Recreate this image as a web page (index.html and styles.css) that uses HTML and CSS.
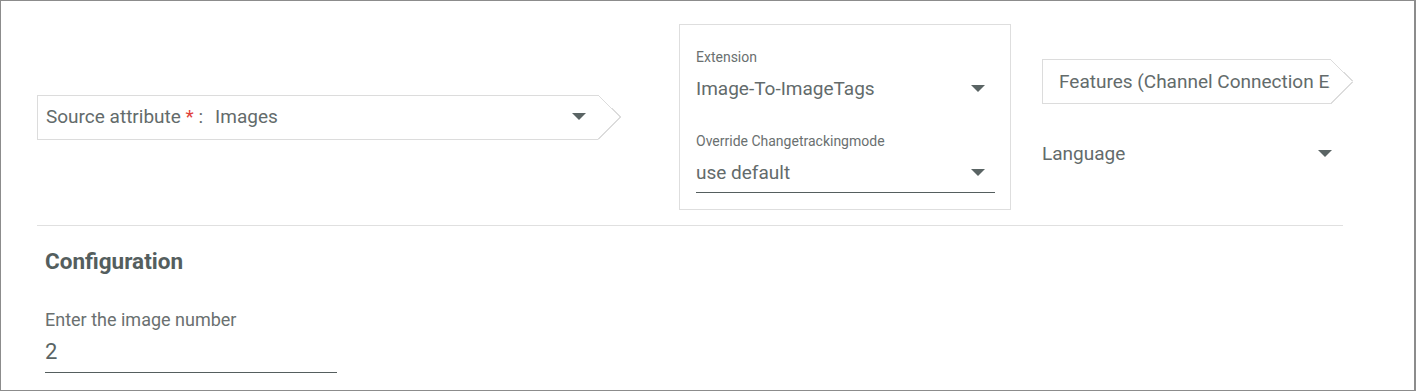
FILE: index.html
```html
<!DOCTYPE html>
<html>
<head>
<meta charset="utf-8">
<link rel="stylesheet" href="styles.css">
</head>
<body>
<div class="frame">
  <div class="top-row">
    <div class="col col-source">
      <div class="chevron-box source-box">
        <span class="src-label">Source attribute <span class="req">*</span> :</span>
        <span class="src-value">Images</span>
        <span class="caret"></span>
      </div>
    </div>
    <div class="col col-ext">
      <div class="ext-box">
        <div class="field">
          <div class="field-label">Extension</div>
          <div class="select-row">
            <span class="select-value">Image-To-ImageTags</span>
            <span class="caret"></span>
          </div>
        </div>
        <div class="field">
          <div class="field-label">Override Changetrackingmode</div>
          <div class="select-row underlined">
            <span class="select-value">use default</span>
            <span class="caret"></span>
          </div>
        </div>
      </div>
    </div>
    <div class="col col-right">
      <div class="chevron-box features-box">
        <span class="features-text">Features (Channel Connection Extension)</span>
      </div>
      <div class="select-row lang-row">
        <span class="select-value">Language</span>
        <span class="caret"></span>
      </div>
    </div>
  </div>
  <div class="divider"></div>
  <div class="config">
    <h2 class="config-title">Configuration</h2>
    <div class="input-field">
      <div class="input-label">Enter the image number</div>
      <div class="input-value">2</div>
    </div>
  </div>
</div>
</body>
</html>
```
FILE: styles.css
```css
html, body {
  margin: 0;
  padding: 0;
  background: #ffffff;
}
body {
  font-family: Roboto, "Noto Sans", sans-serif;
  color: #5f6868;
}
.frame {
  box-sizing: border-box;
  width: 1416px;
  height: 391px;
  border: 1px solid #8c8c8c;
  border-right-width: 2px;
  overflow: hidden;
}
.top-row {
  display: grid;
  grid-template-columns: 584px 332px 311px;
  column-gap: 58px;
  padding-left: 36px;
  padding-top: 23px;
}
.top-row .col-right { margin-left: -27px; }
.col {
  display: flex;
  flex-direction: column;
}
.col-source {
  justify-content: center;
}
.chevron-box {
  position: relative;
  box-sizing: border-box;
  height: 45px;
  border: 1px solid #dcdcdc;
  border-right: none;
  display: flex;
  align-items: center;
  background: #fff;
}
.chevron-box::after {
  content: "";
  position: absolute;
  top: -1px;
  right: -23px;
  width: 23px;
  height: 45px;
  background: linear-gradient(to top right, transparent calc(50% - 0.7px), #dcdcdc calc(50% - 0.7px), #dcdcdc calc(50% + 0.5px), transparent calc(50% + 0.5px)) top / 100% 50% no-repeat,
              linear-gradient(to bottom right, transparent calc(50% - 0.7px), #dcdcdc calc(50% - 0.7px), #dcdcdc calc(50% + 0.5px), transparent calc(50% + 0.5px)) bottom / 100% 50% no-repeat;
}
.source-box {
  width: 561px;
  padding-left: 8px;
  padding-right: 12px;
  font-size: 19px;
  padding-bottom: 1px;
}
.src-label { color: #636b6b; }
.req { color: #e0403a; }
.src-value {
  margin-left: 12px;
  flex: 1;
  color: #636b6b;
}
.caret {
  width: 0;
  height: 0;
  border-left: 7px solid transparent;
  border-right: 7px solid transparent;
  border-top: 7px solid #5a6464;
  flex: none;
}
.ext-box {
  box-sizing: border-box;
  height: 186px;
  border: 1px solid #dedede;
  padding: 24px 15px 0 16px;
}
.field + .field { margin-top: 30px; }
.field-label {
  font-size: 14px;
  color: #6a7070;
  line-height: 16px;
}
.select-row {
  display: flex;
  align-items: center;
  height: 30px;
  margin-top: 8px;
  font-size: 19px;
  color: #636b6b;
}
.select-row .caret { margin-right: 10px; }
.select-value { flex: 1; }
.underlined {
  box-sizing: content-box;
  border-bottom: 1px solid #555e5e;
  height: 30px;
  padding-bottom: 5px;
}
.col-right {
  padding-top: 35px;
}
.features-box {
  width: 288px;
  padding-left: 16px;
  font-size: 19px;
  overflow: visible;
}
.features-text {
  display: block;
  width: 271px;
  overflow: hidden;
  white-space: nowrap;
  color: #636b6b;
}
.lang-row {
  margin-top: 34px;
  width: 290px;
}
.lang-row .caret { margin-right: 0; }
.divider {
  margin: 15px 0 0 36px;
  width: 1306px;
  height: 1px;
  background: #e0e0e0;
}
.config {
  padding-left: 44px;
}
.config-title {
  margin: 22px 0 0 0;
  font-size: 22.5px;
  font-weight: 700;
  color: #545e5e;
  line-height: 26px;
}
.input-field {
  width: 292px;
  margin-top: 36px;
}
.input-label {
  font-size: 18px;
  color: #6a7070;
  line-height: 20px;
}
.input-value {
  font-size: 22px;
  color: #5a6464;
  line-height: 30px;
  padding-top: 7px;
  padding-bottom: 5px;
  border-bottom: 1px solid #555e5e;
}
```
